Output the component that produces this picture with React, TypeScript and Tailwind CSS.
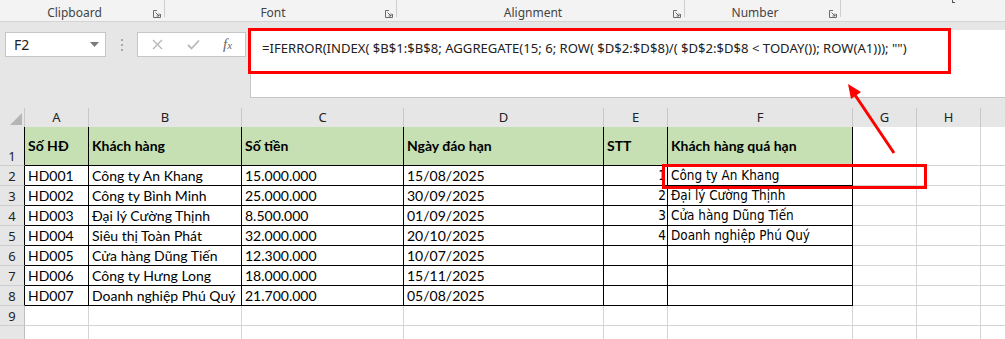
import React from "react";

const letters = ["A", "B", "C", "D", "E", "F", "G", "H", "I"];

const data: string[][] = [
  ["Số HĐ", "Khách hàng", "Số tiền", "Ngày đáo hạn", "STT", "Khách hàng quá hạn"],
  ["HD001", "Công ty An Khang", "15.000.000", "15/08/2025", "1", "Công ty An Khang"],
  ["HD002", "Công ty Bình Minh", "25.000.000", "30/09/2025", "2", "Đại lý Cường Thịnh"],
  ["HD003", "Đại lý Cường Thịnh", "8.500.000", "01/09/2025", "3", "Cửa hàng Dũng Tiến"],
  ["HD004", "Siêu thị Toàn Phát", "32.000.000", "20/10/2025", "4", "Doanh nghiệp Phú Quý"],
  ["HD005", "Cửa hàng Dũng Tiến", "12.300.000", "10/07/2025", "", ""],
  ["HD006", "Công ty Hưng Long", "18.000.000", "15/11/2025", "", ""],
  ["HD007", "Doanh nghiệp Phú Quý", "21.700.000", "05/08/2025", "", ""],
];

const calibri = { fontFamily: "Lato, 'Open Sans', sans-serif", fontSize: "14px" };
const narrow = {
  fontFamily: "'Liberation Sans Narrow', 'DejaVu Sans Condensed', 'Liberation Sans', sans-serif",
  fontSize: "13.4px",
};

function Launcher() {
  return (
    <svg width="8" height="8" viewBox="0 0 8 8" className="shrink-0">
      <path d="M0.5 0.5 H4 M0.5 0.5 V7.5 H7.5 V4" stroke="#6b6b6b" strokeWidth="1" fill="none" />
      <path d="M2.5 2.5 L6 6 M6 3.5 V6 H3.5" stroke="#6b6b6b" strokeWidth="1" fill="none" />
    </svg>
  );
}

function Group({ w, label }: { w: number; label: string }) {
  return (
    <div className="relative h-[21px] flex items-start" style={{ width: w }}>
      <div className="flex-1 text-center text-[12px] leading-[14px] text-[#444] pr-[16px] pt-[6px]">{label}</div>
      <div className="absolute right-[4px] top-[10px]">
        <Launcher />
      </div>
      <div className="absolute right-0 top-0 w-px h-[17px] bg-[#cfcfcf]" />
    </div>
  );
}

export default function App() {
  const rows = [39, 20, 20, 20, 20, 20, 20, 20, 20, 20];
  return (
    <div
      className="relative w-[1005px] h-[339px] overflow-hidden bg-[#e6e6e6]"
      style={{ fontFamily: "'Noto Sans', 'Open Sans', sans-serif" }}
    >
      {/* Ribbon labels */}
      <div className="h-[22px] bg-[#f3f3f3] border-b border-[#d4d4d4] flex items-start">
        <Group w={165} label="Clipboard" />
        <Group w={232} label="Font" />
        <Group w={288} label="Alignment" />
        <Group w={156} label="Number" />
        <div className="flex-1 flex justify-center">
          <div className="ml-[60px] w-[3px] h-[3px] border-b border-l border-[#555]" />
        </div>
      </div>

      {/* Formula area */}
      <div className="h-[86px] flex items-start">
        <div className="flex items-center mt-[10px]">
          <div className="ml-[5px] w-[101px] h-[25px] bg-white border border-[#c6c6c6] flex items-center justify-between pl-[8px] pr-[6px]">
            <span className="text-[14px] text-[#222] leading-none">F2</span>
            <svg width="9" height="5" viewBox="0 0 9 5">
              <path d="M0 0 H9 L4.5 5 Z" fill="#7a7a7a" />
            </svg>
          </div>
          <div className="w-[31px] flex flex-col items-center gap-[3px]">
            <div className="w-[2px] h-[2px] bg-[#a6a6a6]" />
            <div className="w-[2px] h-[2px] bg-[#a6a6a6]" />
            <div className="w-[2px] h-[2px] bg-[#a6a6a6]" />
          </div>
          <div className="w-[109px] h-[25px] bg-white border border-[#c6c6c6] flex items-center">
            <div className="w-[38px] flex justify-center">
              <svg width="11" height="11" viewBox="0 0 11 11">
                <path d="M1 1 L10 10 M10 1 L1 10" stroke="#b8b8b8" strokeWidth="1.4" />
              </svg>
            </div>
            <div className="w-[34px] flex justify-center">
              <svg width="13" height="11" viewBox="0 0 13 11">
                <path d="M1 6 L4.5 9.5 L12 1.5" stroke="#b8b8b8" strokeWidth="1.8" fill="none" />
              </svg>
            </div>
            <div className="w-[35px] flex justify-center">
              <span
                className="text-[15px] italic text-[#666] leading-none"
                style={{ fontFamily: "'Liberation Serif', serif" }}
              >
                f<span className="text-[11px]">x</span>
              </span>
            </div>
          </div>
        </div>
        <div className="ml-[4px] mt-[8px] flex-1 h-[68px] bg-white border-l border-b border-[#c6c6c6] pl-[11px] pt-[5px]">
          <span className="text-[13.1px] text-[#222] whitespace-pre">
            =IFERROR(INDEX( $B$1:$B$8; AGGREGATE(15; 6; ROW( $D$2:$D$8)/( $D$2:$D$8 &lt; TODAY()); ROW(A1))); "")
          </span>
        </div>
      </div>

      {/* Grid */}
      <div className="grid grid-cols-[25px_64px_153px_162px_200px_64px_185px_64px_64px_1fr]">
        <div className="h-[19px] bg-[#e6e6e6] border-r border-[#c8c8c8] flex items-end justify-end pr-[2px] pb-[2px]">
          <svg width="12" height="12" viewBox="0 0 12 12">
            <path d="M12 0 V12 H0 Z" fill="#b5b5b5" />
          </svg>
        </div>
        {letters.map((l, i) => (
          <div
            key={l}
            className={`h-[19px] bg-[#e6e6e6] flex items-center justify-center text-[13px] text-[#222] ${
              i < 8 ? "border-r border-[#c8c8c8]" : ""
            }`}
          >
            {i < 8 ? l : ""}
          </div>
        ))}

        {rows.map((h, r) => {
          const inTable = r < 8;
          return (
            <React.Fragment key={r}>
              <div
                className={`bg-[#e6e6e6] border-b border-[#cdcdcd] flex items-end justify-center text-[13px] text-[#222] leading-[17px] ${
                  inTable ? "border-r border-r-black" : "border-r border-r-[#c0c0c0]"
                }`}
                style={{ height: h }}
              >
                {r < 9 ? r + 1 : ""}
              </div>
              {letters.map((_, c) => {
                const tableCell = inTable && c < 6;
                const val = tableCell ? data[r][c] : "";
                const header = r === 0 && c < 6;
                const isNarrow = c === 4 || c === 5;
                let cls = "bg-white border-r border-b border-[#d4d4d4]";
                if (tableCell) cls = `${header ? "bg-[#c6e0b4]" : "bg-white"} border-r border-b border-black`;
                if (c === 8) cls = "bg-white border-b border-[#d4d4d4]";
                return (
                  <div
                    key={c}
                    className={`${cls} flex ${header ? "items-center" : "items-end"} ${
                      c === 4 && !header ? "justify-end pr-[1px]" : "pl-[3px]"
                    } overflow-hidden whitespace-nowrap text-black leading-[18px] ${header ? "font-bold" : ""}`}
                    style={{ height: h, ...(isNarrow && !header ? narrow : calibri) }}
                  >
                    {val}
                  </div>
                );
              })}
            </React.Fragment>
          );
        })}
      </div>

      {/* Red highlight boxes */}
      <div className="absolute left-[248px] top-[28px] w-[703px] h-[46px] border-[3px] border-[#ff0000]" />
      <div className="absolute left-[662px] top-[164px] w-[265px] h-[25px] border-[3px] border-[#ff0000]" />

      {/* Arrow */}
      <svg className="absolute left-0 top-0 pointer-events-none" width="1005" height="339">
        <line x1="894" y1="153" x2="855" y2="95" stroke="#ff0000" strokeWidth="3" />
        <polygon points="848,84 861,92 851,99" fill="#ff0000" />
      </svg>
    </div>
  );
}
